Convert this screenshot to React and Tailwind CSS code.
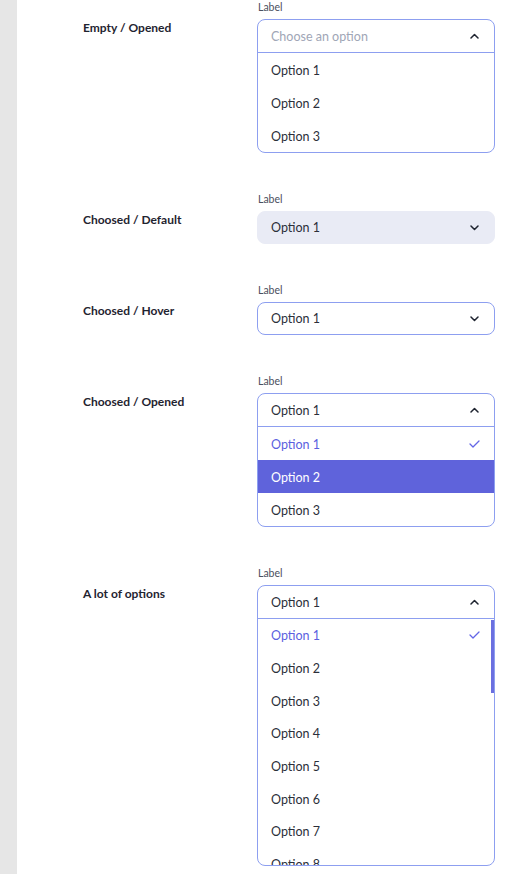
import React from "react";

const font = { fontFamily: "Lato, 'Noto Sans', sans-serif" };

function ChevronUp() {
  return (
    <svg width="9" height="6" viewBox="0 0 9 6" fill="none">
      <path d="M1 5L4.5 1.5L8 5" stroke="#1f2430" strokeWidth="1.5" strokeLinecap="round" strokeLinejoin="round" />
    </svg>
  );
}
function ChevronDown() {
  return (
    <svg width="9" height="6" viewBox="0 0 9 6" fill="none">
      <path d="M1 1L4.5 4.5L8 1" stroke="#1f2430" strokeWidth="1.5" strokeLinecap="round" strokeLinejoin="round" />
    </svg>
  );
}
function Check() {
  return (
    <svg width="11" height="8" viewBox="0 0 11 8" fill="none">
      <path d="M1 4L4 7L10 1" stroke="#6366e6" strokeWidth="1.3" strokeLinecap="round" strokeLinejoin="round" />
    </svg>
  );
}

function Label() {
  return <div className="h-[12px] mb-[6px] text-[10.5px] leading-[12px] text-[#4b5060] pl-[1px]">Label</div>;
}

function Option({ text, state, compact }) {
  const h = compact ? "h-[32.67px]" : "h-[33px]";
  if (state === "selected")
    return (
      <div className={h + " flex items-center justify-between pl-[13px] pr-[14px] text-[12.5px] text-[#5b5fe0]"}>
        <span className="pt-[3px]">{text}</span>
        <Check />
      </div>
    );
  if (state === "hover")
    return (
      <div className={h + " flex items-center pl-[13px] pr-[14px] text-[12.5px] text-white bg-[#5f63db]"}>
        <span className="pt-[3px]">{text}</span>
      </div>
    );
  return (
    <div className={h + " flex items-center pl-[13px] pr-[14px] text-[12.5px] text-[#2b2f3a]"}>
      <span className="pt-[3px]">{text}</span>
    </div>
  );
}

function Header({ text, placeholder, open }) {
  return (
    <div
      className={
        "flex items-center justify-between pl-[13px] pr-[15px] " +
        (open ? "h-[33px] border-b border-[#8d9ff0]" : "h-[31px]")
      }
    >
      <span className={"pt-[2px] text-[12.5px] " + (placeholder ? "text-[#a0a6b6]" : "text-[#2b2f3a]")}>{text}</span>
      {open ? <ChevronUp /> : <ChevronDown />}
    </div>
  );
}

function Row({ title, children, last }) {
  return (
    <div className={"flex " + (last ? "" : "mb-[40px]")}>
      <div className="w-[174px] pt-[19px] text-[12px] leading-[16px] font-bold text-[#1f2430]">{title}</div>
      <div className="w-[238px]">
        <Label />
        {children}
      </div>
    </div>
  );
}

export default function App() {
  const many = ["Option 2", "Option 3", "Option 4", "Option 5", "Option 6", "Option 7", "Option 8"];
  return (
    <div className="flex w-[516px] h-[874px] overflow-hidden bg-white" style={font}>
      <div className="w-[17px] shrink-0 bg-[#e6e6e6]" />
      <div className="pl-[66px] pt-[1px]">
        <Row title="Empty / Opened">
          <div className="rounded-[8px] border border-[#8d9ff0] bg-white overflow-hidden">
            <Header text="Choose an option" placeholder open />
            <Option text="Option 1" />
            <Option text="Option 2" />
            <Option text="Option 3" />
          </div>
        </Row>
        <Row title="Choosed / Default">
          <div className="rounded-[8px] border border-[#e9ebf5] bg-[#e9ebf5]">
            <Header text="Option 1" />
          </div>
        </Row>
        <Row title="Choosed / Hover">
          <div className="rounded-[8px] border border-[#8d9ff0] bg-white">
            <Header text="Option 1" />
          </div>
        </Row>
        <Row title="Choosed / Opened">
          <div className="rounded-[8px] border border-[#8d9ff0] bg-white overflow-hidden">
            <Header text="Option 1" open />
            <Option text="Option 1" state="selected" />
            <Option text="Option 2" state="hover" />
            <Option text="Option 3" />
          </div>
        </Row>
        <Row title="A lot of options" last>
          <div className="rounded-[8px] border border-[#8d9ff0] bg-white overflow-hidden">
            <Header text="Option 1" open />
            <div className="relative h-[246px] overflow-hidden">
              <Option text="Option 1" state="selected" compact />
              {many.map((t) => (
                <Option key={t} text={t} compact />
              ))}
              <div className="absolute right-0 top-[1px] w-[3px] h-[73px] bg-[#6b6fe0]" />
            </div>
          </div>
        </Row>
      </div>
    </div>
  );
}
